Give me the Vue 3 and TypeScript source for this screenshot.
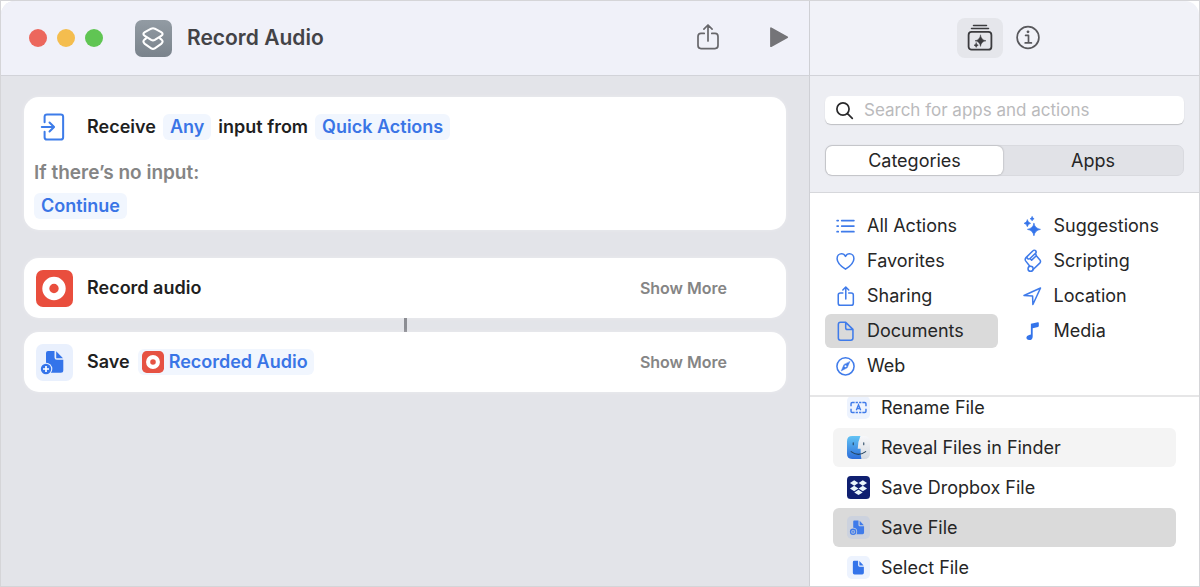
<script setup lang="ts">
import { ref } from 'vue'

interface Category { name: string; icon: string }
interface Action { name: string; icon: string; state?: 'hover' | 'selected' }

const query = ref('')
const tab = ref<'Categories' | 'Apps'>('Categories')
const category = ref('Documents')

const columns: Category[][] = [
  [
    { name: 'All Actions', icon: 'list' },
    { name: 'Favorites', icon: 'heart' },
    { name: 'Sharing', icon: 'share' },
    { name: 'Documents', icon: 'doc' },
    { name: 'Web', icon: 'compass' },
  ],
  [
    { name: 'Suggestions', icon: 'sparkles' },
    { name: 'Scripting', icon: 'scroll' },
    { name: 'Location', icon: 'location' },
    { name: 'Media', icon: 'note' },
  ],
]

const actions: Action[] = [
  { name: 'Rename File', icon: 'rename' },
  { name: 'Reveal Files in Finder', icon: 'finder', state: 'hover' },
  { name: 'Save Dropbox File', icon: 'dropbox' },
  { name: 'Save File', icon: 'save', state: 'selected' },
  { name: 'Select File', icon: 'select' },
]
</script>

<template>
  <div class="frame">
    <div class="window">
      <section class="editor">
        <header class="bar">
          <div class="lights">
            <button class="light red" aria-label="Close"></button>
            <button class="light yellow" aria-label="Minimize"></button>
            <button class="light green" aria-label="Zoom"></button>
          </div>
          <svg class="app-icon" viewBox="0 0 37 37" aria-hidden="true">
            <defs>
              <linearGradient id="appGrey" x1="0" y1="0" x2="0" y2="1">
                <stop offset="0" stop-color="#929ba3" /><stop offset="1" stop-color="#7a838c" />
              </linearGradient>
            </defs>
            <rect width="37" height="37" rx="7" fill="url(#appGrey)" />
            <g fill="none" stroke="#fff" stroke-width="2.1" stroke-linejoin="round">
              <path d="M16.2 8.7Q18 7.8 19.8 8.7L26.2 12.2Q29 14 26.2 15.8L19.8 19.9Q18 20.9 16.2 19.9L9.8 15.8Q7 14 9.8 12.2Z" />
              <path d="M11.6 17.9L9.8 19.3Q7 21.6 9.8 23.9L16.2 28.3Q18 29.5 19.8 28.3L26.2 23.9Q29 21.6 26.2 19.3L24.4 17.9" />
            </g>
          </svg>
          <h1>Record Audio</h1>
          <button class="tool share" aria-label="Share">
            <svg viewBox="0 0 24 28" fill="none" stroke="#67676b" stroke-width="1.7" stroke-linecap="round" stroke-linejoin="round">
              <path d="M8.2 9.4H5Q2 9.4 2 12.4V21.6Q2 24.6 5 24.6H19Q22 24.6 22 21.6V12.4Q22 9.4 19 9.4H15.8M12 17V1.6M7.9 5.1L12 1L16.1 5.1" />
            </svg>
          </button>
          <button class="tool play" aria-label="Run">
            <svg viewBox="0 0 20 22"><path d="M2 1.2V19.2L18.2 10.2Z" fill="#747478" stroke="#747478" stroke-width="1.8" stroke-linejoin="round" /></svg>
          </button>
        </header>

        <main class="canvas">
          <article class="card input-card">
            <div class="sentence">
              <span class="lead">
                <svg class="receive-icon" viewBox="0 0 26 29" fill="none" stroke="#3d7ce9" stroke-width="2.1" stroke-linecap="round" stroke-linejoin="round">
                  <path d="M4.3 9.5V4Q4.3 1.5 6.8 1.5H21Q23.5 1.5 23.5 4V25Q23.5 27.5 21 27.5H6.8Q4.3 27.5 4.3 25V19.5M1.4 14.5H13.6M9.4 9.8L14.1 14.5L9.4 19.2" />
                </svg>
              </span>
              <span>Receive</span>
              <button class="chip">Any</button>
              <span>input from</span>
              <button class="chip">Quick Actions</button>
            </div>
            <p class="muted">If there’s no input:</p>
            <button class="chip">Continue</button>
          </article>

          <article class="card step">
            <svg class="step-icon" viewBox="0 0 37 37" aria-hidden="true">
              <rect width="37" height="37" rx="7" fill="#e94e3d" /><circle cx="18" cy="18.5" r="8.2" fill="none" stroke="#fff" stroke-width="7" />
            </svg>
            <span>Record audio</span>
            <button class="more">Show More</button>
          </article>
          <div class="link"></div>
          <article class="card step">
            <svg class="step-icon" viewBox="0 0 37 37" aria-hidden="true">
              <rect width="37" height="37" rx="7" fill="#e9f0fd" />
              <path d="M12 7H18.5V13.5Q18.5 15.8 20.8 15.8H27.3V26.2Q27.3 28.7 24.8 28.7H12.5Q10 28.7 10 26.2V9Q10 7 12 7Z" fill="#3474ea" />
              <path d="M20.2 7.3L27 14.2H20.2Z" fill="#3474ea" />
              <circle cx="10" cy="25" r="6.3" fill="#e9f0fd" /><circle cx="10" cy="25" r="5.2" fill="#3474ea" />
              <path d="M10 22V28M7 25H13" stroke="#fff" stroke-width="1.7" />
            </svg>
            <span>Save</span>
            <button class="chip variable">
              <svg viewBox="0 0 37 37" aria-hidden="true"><rect width="37" height="37" rx="8" fill="#e65243" /><circle cx="18.5" cy="18.5" r="8.2" fill="none" stroke="#fff" stroke-width="7" /></svg>
              Recorded Audio
            </button>
            <button class="more">Show More</button>
          </article>
        </main>
      </section>

      <aside class="library">
        <header class="bar library-bar">
          <button class="pane-button active" aria-label="Action Library">
            <svg viewBox="0 0 26 28" fill="none" stroke="#3b3b3e" stroke-width="1.8" stroke-linecap="round">
              <path d="M6.5 1.4H19.5M4.5 4.6H21.5" stroke-width="1.5" />
              <rect x="1.6" y="7.9" width="22.8" height="17.8" rx="3" />
              <path d="M13.5 11.2Q14.2 16.1 19 16.8Q14.2 17.5 13.5 22.4Q12.8 17.5 8 16.8Q12.8 16.1 13.5 11.2ZM9.2 18.9Q9.5 20.8 11.3 21.2Q9.5 21.6 9.2 23.4Q8.8 21.6 7 21.2Q8.8 20.8 9.2 18.9Z" fill="#3b3b3e" stroke="#3b3b3e" stroke-width=".5" />
            </svg>
          </button>
          <button class="pane-button" aria-label="Shortcut Details">
            <svg viewBox="0 0 26 26" fill="none" stroke="#59595d" stroke-width="1.7" stroke-linecap="round">
              <circle cx="13" cy="12.5" r="10.9" /><path d="M10.6 10.4H13.5V17.7M10.2 17.9H16.4" stroke-linejoin="round" /><circle cx="13" cy="6.8" r="1.4" fill="#59595d" stroke="none" />
            </svg>
          </button>
        </header>

        <div class="filters">
          <label class="search">
            <svg viewBox="0 0 20 20" fill="none" stroke="#29292b" stroke-width="1.8" stroke-linecap="round" aria-hidden="true"><circle cx="8.4" cy="8.4" r="6.4" /><path d="M13.2 13.2L18.2 18.2" /></svg>
            <input v-model="query" type="text" placeholder="Search for apps and actions" aria-label="Search for apps and actions" />
          </label>
          <div class="tabs" role="tablist">
            <button role="tab" :aria-selected="tab === 'Categories'" :class="{ on: tab === 'Categories' }" @click="tab = 'Categories'">Categories</button>
            <button role="tab" :aria-selected="tab === 'Apps'" :class="{ on: tab === 'Apps' }" @click="tab = 'Apps'">Apps</button>
          </div>
        </div>

        <nav class="categories">
          <div v-for="(column, i) in columns" :key="i" class="column">
            <button v-for="c in column" :key="c.name" class="category" :class="{ chosen: category === c.name }" @click="category = c.name">
              <svg viewBox="0 0 22 22" fill="none" stroke="#3f7bea" stroke-width="1.6" stroke-linecap="round" stroke-linejoin="round" aria-hidden="true">
                <path v-if="c.icon === 'list'" d="M2.2 4.8H3.4M2.2 10.6H3.4M2.2 16.4H3.4M7 4.8H19.8M7 10.6H19.8M7 16.4H19.8" stroke-width="1.8" />
                <path v-else-if="c.icon === 'heart'" d="M11 19C7 16.4 2.2 12.5 2.2 8C2.2 4.9 4.4 2.9 6.8 2.9C8.7 2.9 10.2 4 11 5.6C11.8 4 13.3 2.9 15.2 2.9C17.6 2.9 19.8 4.9 19.8 8C19.8 12.5 15 16.4 11 19Z" />
                <path v-else-if="c.icon === 'share'" d="M8.2 7.3H5.6Q3.4 7.3 3.4 9.5V18Q3.4 20.2 5.6 20.2H17Q19.2 20.2 19.2 18V9.5Q19.2 7.3 17 7.3H14.4M11.3 13.5V1.3M8.2 4.2L11.3 1.1L14.4 4.2" />
                <path v-else-if="c.icon === 'doc'" d="M5.8 1.4H11.2L18.8 8.8V17.9Q18.8 20.2 16.5 20.2H5.8Q3.5 20.2 3.5 17.9V3.7Q3.5 1.4 5.8 1.4ZM11.2 1.7V7Q11.2 8.9 13.1 8.9H18.6" />
                <template v-else-if="c.icon === 'compass'">
                  <circle cx="11" cy="10.8" r="9" /><path d="M15.5 6L12.8 12.4L6.5 15.6L9.3 9.2Z" fill="#3f7bea" stroke-width=".5" /><circle cx="11" cy="10.8" r="1.1" fill="#fff" stroke="none" />
                </template>
                <path v-else-if="c.icon === 'sparkles'" fill="#3474ea" stroke="#3474ea" stroke-width=".7" d="M12.5 7.8Q13.6 13 19.3 14Q13.6 15 12.5 20.8Q11.4 15 5.7 14Q11.4 13 12.5 7.8ZM5.6 4.2Q6.3 7.1 9 7.7Q6.3 8.2 5.6 11.2Q5 8.2 2.2 7.7Q5 7.1 5.6 4.2ZM10.6 .8Q11 2.5 12.7 2.9Q11 3.3 10.6 5Q10.2 3.3 8.5 2.9Q10.2 2.5 10.6 .8Z" />
                <template v-else-if="c.icon === 'scroll'">
                  <path d="M8.4 7.8L14.2 2.3A1.8 1.8 0 0 0 11.5 -.3L4.2 6.9Q2.6 8.7 4 10.6L8.2 15.9M8.4 7.8A1.7 1.7 0 0 1 5.7 5.6M8.4 7.8L10.1 9.6L15 4.9L14.2 2.3M15 4.9L18.8 9.3Q20.1 11.1 18.6 12.7L11.4 19.6" />
                  <circle cx="9" cy="18.6" r="2.7" />
                </template>
                <path v-else-if="c.icon === 'location'" d="M2.1 10L19.4 2.1L11.4 19.4L11.1 10.5Z" />
                <path v-else fill="#3474ea" stroke="none" d="M9.3 3L16.6 1.3Q17.6 1.1 17.6 2V5.2Q17.6 6 16.8 6.2L11.2 7.5V16.2Q11.2 20 7.5 20Q4.6 20 4.6 17.4Q4.6 15.1 7.5 14.6L9.3 14.2Z" />
              </svg>
              {{ c.name }}
            </button>
          </div>
        </nav>

        <div class="results">
          <ul>
            <li v-for="a in actions" :key="a.name">
              <button class="action" :class="a.state">
                <svg viewBox="0 0 24 24" aria-hidden="true">
                  <template v-if="a.icon === 'rename'">
                    <rect width="24" height="24" rx="5" fill="#edf3fe" />
                    <path d="M8 6.7H5.5Q4.2 6.7 4.2 8V10.6M4.2 13.4V16Q4.2 17.3 5.5 17.3H8M16 6.7H18.5Q19.8 6.7 19.8 8V10.6M19.8 13.4V16Q19.8 17.3 18.5 17.3H16M9 6.7H11.4M12.6 6.7H15M9 17.3H11.4M12.6 17.3H15" fill="none" stroke="#3f7bea" stroke-width="1.5" />
                    <path d="M9.7 14.8L12 9.2L14.3 14.8M10.6 13H13.4" fill="none" stroke="#3f7bea" stroke-width="1.4" />
                  </template>
                  <template v-else-if="a.icon === 'finder'">
                    <defs>
                      <linearGradient id="finderBlue" x1="0" y1="0" x2="0" y2="1"><stop offset="0" stop-color="#62c3f4" /><stop offset="1" stop-color="#2d6dd9" /></linearGradient>
                      <linearGradient id="finderGrey" x1="0" y1="0" x2="0" y2="1"><stop offset="0" stop-color="#f7f8fa" /><stop offset="1" stop-color="#d5dae1" /></linearGradient>
                    </defs>
                    <rect width="24" height="24" rx="5.4" fill="url(#finderGrey)" />
                    <path d="M5.4 0H14Q11.4 5.5 11.2 13.2H14.2Q14 18.5 15 24H5.4Q0 24 0 18.6V5.4Q0 0 5.4 0Z" fill="url(#finderBlue)" />
                    <path d="M6.5 7V9M17.5 7V9M4.3 16.3Q11.8 22 19.5 16.3" fill="none" stroke="#24435f" stroke-width="1.1" stroke-linecap="round" />
                  </template>
                  <template v-else-if="a.icon === 'dropbox'">
                    <rect width="24" height="24" rx="4" fill="#0f1f70" />
                    <path d="M7.5 4.5L11.9 7.3L7.5 10.1L3.1 7.3ZM16.5 4.5L20.9 7.3L16.5 10.1L12.1 7.3ZM7.5 10.3L11.9 13.1L7.5 15.9L3.1 13.1ZM16.5 10.3L20.9 13.1L16.5 15.9L12.1 13.1ZM12 14.3L16.4 17.1L12 19.9L7.6 17.1Z" fill="#e9f6fc" />
                  </template>
                  <template v-else-if="a.icon === 'save'">
                    <rect width="24" height="24" rx="5" fill="#ccd2de" />
                    <path d="M7.5 4.7H12V9.5Q12 10.8 13.3 10.8H17.8V17.5Q17.8 19 16.3 19H8Q6.5 19 6.5 17.5V5.7Q6.5 4.7 7.5 4.7ZM13.2 4.9L17.6 9.6H13.2Z" fill="#3f7bea" />
                    <circle cx="6.4" cy="16.5" r="4.2" fill="#ccd2de" /><circle cx="6.4" cy="16.5" r="2.7" fill="none" stroke="#3f7bea" stroke-width="1.4" />
                    <path d="M6.4 15V18M4.9 16.5H7.9" stroke="#3f7bea" stroke-width=".9" />
                  </template>
                  <template v-else>
                    <rect width="24" height="24" rx="5" fill="#edf3fe" />
                    <path d="M7.5 5H11.6V9.7Q11.6 11.2 13.1 11.2H17.6V17.5Q17.6 19.2 15.9 19.2H7.8Q6.1 19.2 6.1 17.5V6.4Q6.1 5 7.5 5ZM12.9 5.2L17.3 9.9H12.9Z" fill="#3474ea" />
                  </template>
                </svg>
                {{ a.name }}
              </button>
            </li>
          </ul>
        </div>
      </aside>
    </div>
  </div>
</template>

<style>
body { margin: 0; background: #fff; }
</style>

<style scoped>
* { box-sizing: border-box; }
.frame {
  height: 100vh;
  border: 1px solid #d5d5d8;
  font-family: Inter, "Liberation Sans", sans-serif;
  font-size: 18px;
  line-height: 26px;
  color: #262626;
}
.window {
  display: flex;
  height: 100%;
  overflow: hidden;
  border-radius: 14px 14px 0 0;
}
button {
  border: 0;
  padding: 0;
  margin: 0;
  background: none;
  font: inherit;
  color: inherit;
}
svg { display: block; flex: none; overflow: visible; }

.editor { display: flex; flex: 1; min-width: 0; flex-direction: column; background: #e3e4e9; }
.bar {
  display: flex;
  flex: none;
  align-items: center;
  height: 75px;
  background: #f0f1f9;
  border-bottom: 1px solid #d2d3d9;
}
.editor .bar { padding: 0 20px 0 28px; }
.lights { display: flex; gap: 10px; margin-right: 32px; }
.light { width: 18px; height: 18px; border-radius: 50%; }
.red { background: #ec675d; }
.yellow { background: #f4bd4e; }
.green { background: #60c553; }
.app-icon { width: 37px; height: 37px; }
h1 { flex: 1; margin: 0 0 0 15px; font-size: 21px; font-weight: 600; color: #434347; }
.share svg { width: 24px; height: 28px; }
.play { margin-left: 49px; }
.play svg { width: 20px; height: 22px; }

.canvas { flex: 1; padding: 21px 23px; font-weight: 600; color: #1f1f1f; }
.card { background: #fff; border-radius: 15px; box-shadow: 0 0 4px rgba(255, 255, 255, 0.3); }
.input-card { padding: 16px 10px 11px; margin-bottom: 28px; }
.sentence { display: flex; align-items: center; gap: 7px; }
.lead { width: 46px; padding-left: 6px; }
.receive-icon { width: 26px; height: 28px; }
.muted { margin: 19px 0 7px; font-size: 19px; color: #858585; }
.chip { height: 26px; padding: 0 7px; border-radius: 6px; background: #f1f6fe; color: #3a75e6; }
.step { display: flex; align-items: center; height: 60px; padding: 0 59px 0 12px; }
.step-icon { width: 37px; height: 37px; margin-right: 14px; }
.variable { display: flex; align-items: center; gap: 5px; margin-left: 8px; padding: 0 6px 0 4px; }
.variable svg { width: 22px; height: 22px; }
.more { margin-left: auto; font-size: 16px; color: #858585; }
.link { width: 3px; height: 14px; margin: 0 auto; background: #8c8d93; }

.library {
  display: flex;
  flex: none;
  width: 390px;
  flex-direction: column;
  border-left: 1px solid #cfd0d5;
  background: #fff;
}
.library-bar { justify-content: center; gap: 12px; padding-right: 12px; background: #f1f2f8; }
.pane-button { display: flex; align-items: center; justify-content: center; height: 40px; border-radius: 8px; }
.active { width: 46px; background: #e5e6eb; }
.active svg { width: 26px; height: 28px; }
.pane-button:not(.active) svg { width: 26px; height: 26px; }
.filters { padding: 20px 15px 16px; background: #edeef3; border-bottom: 1px solid #d6d7db; }
.search {
  display: flex;
  align-items: center;
  gap: 10px;
  height: 28px;
  padding: 0 10px;
  border-radius: 6px;
  background: #fff;
  box-shadow: 0 1px 1px rgba(0, 0, 0, 0.2);
}
.search svg { width: 19px; height: 19px; }
input { flex: 1; min-width: 0; padding: 0; border: 0; outline: 0; background: none; font: inherit; font-size: 17px; color: #262626; }
input::placeholder { color: #bababc; opacity: 1; }
.tabs { display: flex; height: 31px; margin-top: 21px; border: 1px solid #d9dadf; border-radius: 7px; background: #e1e2e7; }
.tabs button { flex: 1 1 0; border-radius: 6px; line-height: 28px; }
.tabs .on { flex: 0 0 177px; background: #fff; box-shadow: 0 0 2px rgba(0, 0, 0, 0.35); }

.categories { display: flex; gap: 14px; padding: 16px 15px 12px; border-bottom: 2px solid #e6e6e7; }
.column { display: flex; width: 173px; flex-direction: column; gap: 1px; }
.category { display: flex; align-items: center; gap: 11px; height: 34px; padding-left: 10px; border-radius: 6px; text-align: left; }
.category svg { width: 21px; height: 21px; }
.chosen { background: #dadada; }
.results { flex: 1; min-height: 0; overflow: hidden; }
ul { display: flex; flex-direction: column; gap: 1px; margin: -9px 23px 0; padding: 0; list-style: none; }
.action { display: flex; align-items: center; gap: 11px; width: 100%; height: 39px; padding-left: 14px; border-radius: 6px; text-align: left; }
.action svg { width: 23px; height: 23px; }
.hover { background: #f4f4f4; }
.selected { background: #dadada; }
</style>
